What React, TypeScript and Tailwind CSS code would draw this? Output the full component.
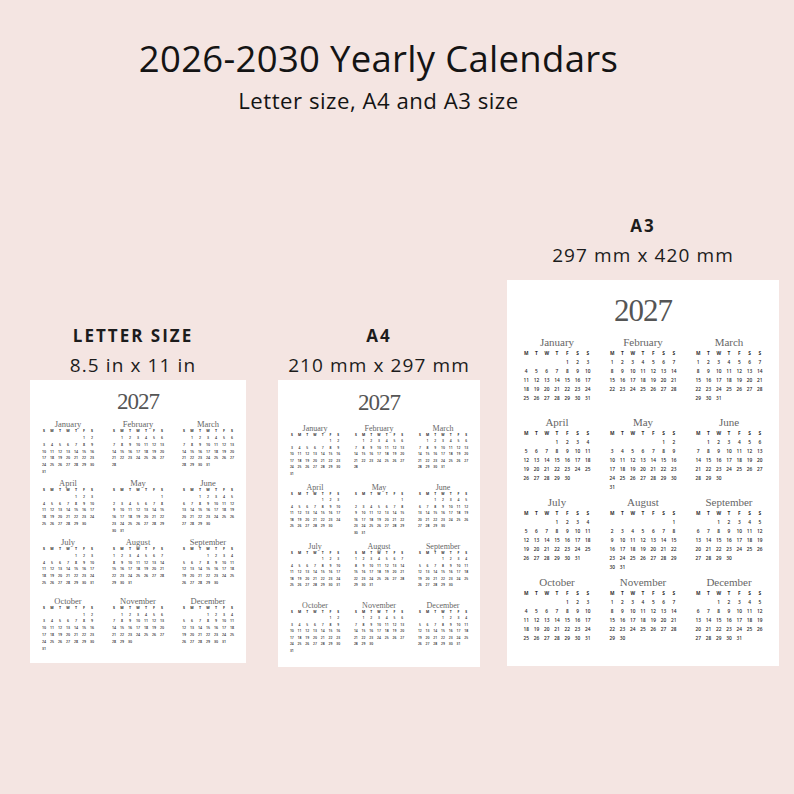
import React from 'react';

declare module 'react/jsx-runtime' {
  export function jsx(type: any, props?: any, key?: any): any;
  export function jsxs(type: any, props?: any, key?: any): any;
  export function jsxDEV(type: any, props?: any, key?: any): any;
}

declare global {
  namespace JSX {
    interface IntrinsicElements {
      [elemName: string]: any;
    }
  }
}

type SizeStyle = {
  card: string;
  title: string;
  grid: string;
  month: string;
  name: string;
  cell: string;
  mondayStart: boolean;
};

const MONTHS = [
  'January', 'February', 'March', 'April', 'May', 'June',
  'July', 'August', 'September', 'October', 'November', 'December',
];

const YEAR = 2027;

// every class written out per paper size
const LETTER: SizeStyle = {
  card: 'w-[216px] h-[283px] pt-[9px] px-[10px]',
  title: 'text-[23px] leading-[26px] tracking-[-1px]',
  grid: 'mt-[5px] gap-x-[14px] gap-y-[3px]',
  month: 'w-[56px]',
  name: 'h-[8px] leading-[8px] text-[8.5px]',
  cell: 'h-[6.85px] leading-[6.85px] text-[3.6px]',
  mondayStart: false,
};

const A4: SizeStyle = {
  card: 'w-[202px] h-[287px] pt-[10px] px-[10px]',
  title: 'text-[23px] leading-[26px] tracking-[-1px]',
  grid: 'mt-[8.5px] gap-x-[10px] gap-y-[6.5px]',
  month: 'w-[54px]',
  name: 'h-[7px] leading-[7px] text-[8px]',
  cell: 'h-[6.5px] leading-[6.5px] text-[3.4px]',
  mondayStart: false,
};

const A3: SizeStyle = {
  card: 'w-[272px] h-[386px] pt-[13px] px-[14px]',
  title: 'text-[31px] leading-[36px] tracking-[-1px]',
  grid: 'mt-[6.5px] gap-x-[14px] gap-y-[4px]',
  month: 'w-[72px]',
  name: 'h-[13px] leading-[13px] text-[11px]',
  cell: 'h-[9px] leading-[9px] text-[4.8px]',
  mondayStart: true,
};

function monthCells(year: number, m: number, mondayStart: boolean): (number | null)[] {
  const first = new Date(year, m, 1).getDay();
  const offset = mondayStart ? (first + 6) % 7 : first;
  const days = new Date(year, m + 1, 0).getDate();
  const out: (number | null)[] = [];
  for (let i = 0; i < offset; i++) out.push(null);
  for (let d = 1; d <= days; d++) out.push(d);
  while (out.length < 42) out.push(null);
  return out;
}

const Month = ({ m, s }: { m: number; s: SizeStyle }) => {
  const head = s.mondayStart ? ['M', 'T', 'W', 'T', 'F', 'S', 'S'] : ['S', 'M', 'T', 'W', 'T', 'F', 'S'];
  const cells = monthCells(YEAR, m, s.mondayStart);
  return (
    <div className={s.month}>
      <div className={`text-center text-[#666] font-['Liberation_Serif',serif] whitespace-nowrap ${s.name}`}>
        {MONTHS[m]}
      </div>
      <div className="grid grid-cols-7 font-['Open_Sans',sans-serif] text-[#2a2a2a]">
        {head.map((h, i) => (
          <div key={'h' + i} className={`text-center font-bold ${s.cell}`}>{h}</div>
        ))}
        {cells.map((d, i) => (
          <div key={i} className={`text-center font-semibold ${s.cell}`}>{d ?? ''}</div>
        ))}
      </div>
    </div>
  );
};

const CalendarCard = ({ s }: { s: SizeStyle }) => (
  <div className={`bg-white flex flex-col ${s.card}`}>
    <div className={`text-center text-[#555] font-['Liberation_Serif',serif] ${s.title}`}>{YEAR}</div>
    <div className={`grid grid-cols-3 ${s.grid}`}>
      {MONTHS.map((_, m) => (
        <Month key={m} m={m} s={s} />
      ))}
    </div>
  </div>
);

const Label = ({ top, sub, className }: { top: string; sub: string; className?: string }) => (
  <div className={`flex flex-col items-center text-[#1c1c1c] font-['Open_Sans',sans-serif] ${className ?? ''}`}>
    <div className="h-[24px] leading-[24px] text-[17px] font-bold tracking-[2px]">{top}</div>
    <div className="mt-[3.5px] h-[26px] leading-[26px] text-[19px] tracking-[1.1px]">{sub}</div>
  </div>
);

export default function App() {
  return (
    <div className="w-[794px] h-[794px] bg-[#f4e5e2] flex flex-col font-['Open_Sans',sans-serif] overflow-hidden">
      <div className="pt-[36px] pr-[37px] text-center text-[#141414]">
        <h1 className="h-[44px] leading-[44px] text-[36.5px] tracking-[0.3px]">2026-2030 Yearly Calendars</h1>
        <p className="mt-[7.5px] h-[26px] leading-[26px] text-[22.2px] tracking-[0.5px]">Letter size, A4 and A3 size</p>
      </div>

      <div className="mt-[100.5px] pl-[30px] flex items-end">
        <div className="flex flex-col mb-[4px]">
          <Label top="LETTER SIZE" sub="8.5 in x 11 in" className="pr-[10px]" />
          <div className="mt-[2.5px]">
            <CalendarCard s={LETTER} />
          </div>
        </div>

        <div className="ml-[32px] flex flex-col">
          <Label top="A4" sub="210 mm x 297 mm" />
          <div className="mt-[2.5px]">
            <CalendarCard s={A4} />
          </div>
        </div>

        <div className="ml-[27px] flex flex-col mb-[1px]">
          <Label top="A3" sub="297 mm x 420 mm" />
          <div className="mt-[12.5px]">
            <CalendarCard s={A3} />
          </div>
        </div>
      </div>
    </div>
  );
}
